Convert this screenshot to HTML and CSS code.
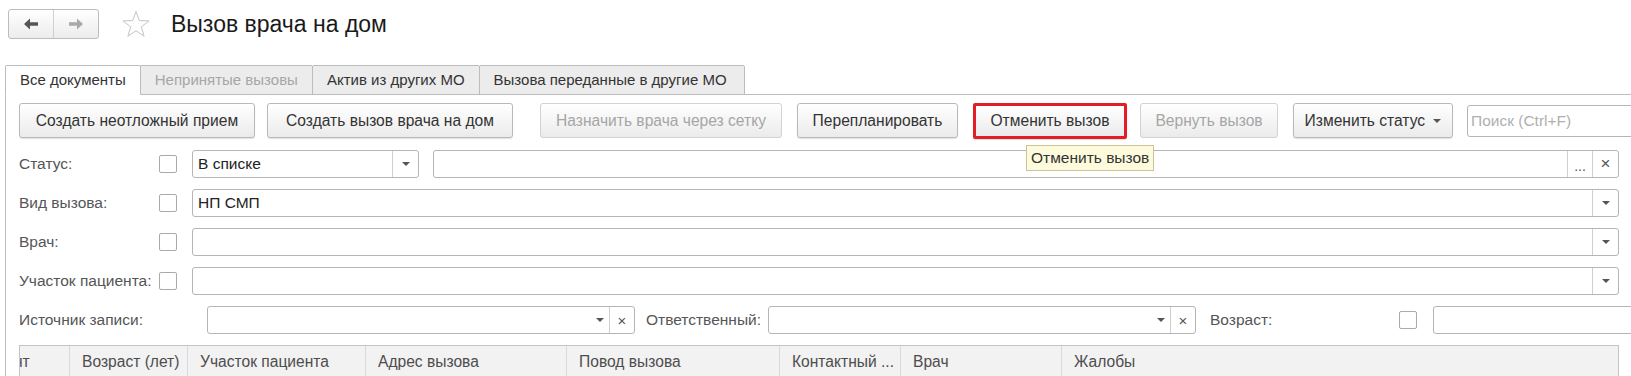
FILE: index.html
```html
<!DOCTYPE html>
<html lang="ru">
<head>
    <meta charset="UTF-8">
    <title>Вызов врача на дом</title>
    <link rel="stylesheet" href="styles.css">
</head>
<body>

    <div class="page-head">
        <div class="nav">
            <span class="nav-btn">
                <svg width="16" height="14" viewBox="0 0 16 14"><path d="M1 7 L7 1.5 V5.2 H15 V8.8 H7 V12.5 Z" fill="#555"/></svg>
            </span>
            <span class="nav-btn nav-sep">
                <svg width="16" height="14" viewBox="0 0 16 14"><path d="M15 7 L9 1.5 V5.2 H1 V8.8 H9 V12.5 Z" fill="#a9a9a9"/></svg>
            </span>
        </div>
        <svg class="star" width="30" height="28" viewBox="0 0 30 28">
            <polygon points="15,1.5 18.3,10.6 28,10.9 20.3,16.8 23.1,26.2 15,20.7 6.9,26.2 9.7,16.8 2,10.9 11.7,10.6" fill="none" stroke="#c4c4c4" stroke-width="1"/>
        </svg>
        <h1 class="title">Вызов врача на дом</h1>
    </div>

    <div class="tabs">
        <div class="tab active">Все документы</div>
        <div class="tab disabled">Непринятые вызовы</div>
        <div class="tab">Актив из других МО</div>
        <div class="tab">Вызова переданные в другие МО</div>
    </div>

    <div class="panel">
        <div class="toolbar">
            <button class="btn btn-urgent">Создать неотложный прием</button>
            <button class="btn btn-home">Создать вызов врача на дом</button>
            <button class="btn btn-grid disabled">Назначить врача через сетку</button>
            <button class="btn btn-replan">Перепланировать</button>
            <span class="marked-wrap">
                <button class="btn marked">Отменить вызов</button>
                <span class="tooltip">Отменить вызов</span>
            </span>
            <button class="btn btn-return disabled">Вернуть вызов</button>
            <button class="btn btn-status">Изменить статус <span class="caret"></span></button>
            <div class="search">Поиск (Ctrl+F)</div>
        </div>

        <div class="row first">
            <span class="label">Статус:</span>
            <span class="check"></span>
            <div class="field combo">
                <span class="value">В списке</span>
                <span class="fbtn"><span class="caret"></span></span>
            </div>
            <div class="field wide">
                <span class="value"></span>
                <span class="fbtn dots">...</span>
                <span class="fbtn">&times;</span>
            </div>
        </div>

        <div class="row">
            <span class="label">Вид вызова:</span>
            <span class="check"></span>
            <div class="field wide">
                <span class="value">НП СМП</span>
                <span class="fbtn"><span class="caret"></span></span>
            </div>
        </div>

        <div class="row">
            <span class="label">Врач:</span>
            <span class="check"></span>
            <div class="field wide">
                <span class="value"></span>
                <span class="fbtn"><span class="caret"></span></span>
            </div>
        </div>

        <div class="row">
            <span class="label">Участок пациента:</span>
            <span class="check"></span>
            <div class="field wide">
                <span class="value"></span>
                <span class="fbtn"><span class="caret"></span></span>
            </div>
        </div>

        <div class="row">
            <span class="label source">Источник записи:</span>
            <div class="field mid">
                <span class="value"></span>
                <span class="fbtn plain"><span class="caret"></span></span>
                <span class="fbtn thin">&times;</span>
            </div>
            <span class="label resp">Ответственный:</span>
            <div class="field mid">
                <span class="value"></span>
                <span class="fbtn plain"><span class="caret"></span></span>
                <span class="fbtn thin">&times;</span>
            </div>
            <span class="label age">Возраст:</span>
            <span class="check"></span>
            <div class="field tail"></div>
        </div>

        <div class="grid-head">
            <div class="col c0"><span class="cut">нт</span></div>
            <div class="col c1">Возраст (лет)</div>
            <div class="col c2">Участок пациента</div>
            <div class="col c3">Адрес вызова</div>
            <div class="col c4">Повод вызова</div>
            <div class="col c5">Контактный ...</div>
            <div class="col c6">Врач</div>
            <div class="col c7">Жалобы</div>
        </div>
    </div>

</body>
</html>
```

FILE: styles.css
```css
html {
    overflow: hidden;
}

body {
    margin: 0;
    background-color: #fff;
    color: #4a4a4a;
    font-family: "Liberation Sans", Arial, sans-serif;
    font-size: 15.5px;
}

/* header */

.page-head {
    display: flex;
    align-items: center;
    height: 48px;
    padding: 0 8px;
}

.nav {
    display: flex;
    width: 91px;
    height: 30px;
    box-sizing: border-box;
    border: 1px solid #bcbcbc;
    border-radius: 3px;
    background: linear-gradient(#fff, #ececec);
}

.nav-btn {
    flex: 1;
    display: flex;
    align-items: center;
    justify-content: center;
}

.nav-sep {
    border-left: 1px solid #d0d0d0;
}

.star {
    margin-left: 22px;
}

.title {
    margin: 0 0 0 20px;
    font-size: 23px;
    font-weight: normal;
    color: #1a1a1a;
}

/* tabs */

.tabs {
    display: flex;
    margin: 17px 0 0 5px;
    font-size: 15px;
}

.tab {
    height: 28px;
    line-height: 28px;
    padding: 0 14px;
    border: 1px solid #bcbcbc;
    border-radius: 2px 2px 0 0;
    margin-right: -1px;
    margin-bottom: -1px;
    background-color: #ececec;
    color: #333;
}

.tab:last-child {
    padding-right: 17px;
}

.tab.active {
    background-color: #fff;
    border-bottom-color: #fff;
}

.tab.disabled {
    color: #a6a6a6;
}

/* panel */

.panel {
    margin-left: 5px;
    border-top: 1px solid #bcbcbc;
    border-left: 1px solid #bcbcbc;
    padding: 8px 12px 0 13px;
}

.toolbar {
    display: flex;
    align-items: center;
    height: 35px;
}

.btn {
    flex-shrink: 0;
    height: 35px;
    padding: 0;
    border: 1px solid #b9b9b9;
    border-radius: 3px;
    background: linear-gradient(#fff, #ebebeb);
    box-shadow: 0 1px 1px rgba(0, 0, 0, 0.12);
    font-family: inherit;
    font-size: 15.6px;
    color: #333;
}

.btn.disabled {
    color: #a6a6a6;
    border-color: #d2d2d2;
    box-shadow: none;
}

.btn-urgent { width: 236px; margin-right: 12px; }
.btn-home { width: 246px; margin-right: 27px; }
.btn-grid { width: 242px; margin-right: 15px; }
.btn-replan { width: 161px; margin-right: 15px; }
.btn-return { width: 138px; margin-right: 15px; }
.btn-status { width: 160px; margin-right: 14px; }

.marked-wrap {
    position: relative;
    margin-right: 13px;
}

.btn.marked {
    width: 154px;
    height: 36px;
    border: 3px solid #e21d24;
    border-radius: 2px;
}

.tooltip {
    position: absolute;
    top: 42px;
    left: 53px;
    padding: 3px 4px;
    white-space: nowrap;
    background-color: #fdfbdb;
    border: 1px solid #c9c49a;
    color: #333;
}

.btn .caret {
    margin-left: 4px;
    vertical-align: middle;
}

.caret {
    display: inline-block;
    width: 0;
    height: 0;
    border-left: 4px solid transparent;
    border-right: 4px solid transparent;
    border-top: 4px solid #555;
}

.search {
    flex-shrink: 0;
    width: 200px;
    height: 30px;
    line-height: 30px;
    padding-left: 3px;
    border: 1px solid #b5b5b5;
    border-radius: 3px;
    color: #b0b0b0;
}

/* filter rows */

.row {
    display: flex;
    align-items: center;
    height: 28px;
    margin-top: 11px;
}

.row.first {
    margin-top: 12px;
}

.label {
    width: 140px;
    flex-shrink: 0;
    color: #555;
}

.check {
    width: 18px;
    height: 18px;
    flex-shrink: 0;
    box-sizing: border-box;
    border: 1px solid #aaa;
    border-radius: 2px;
    margin-right: 15px;
}

.field {
    display: flex;
    height: 28px;
    box-sizing: border-box;
    border: 1px solid #b5b5b5;
    border-radius: 3px;
    color: #222;
}

.field .value {
    flex: 1;
    line-height: 26px;
    padding-left: 5px;
}

.fbtn {
    width: 25px;
    display: flex;
    align-items: center;
    justify-content: center;
    border-left: 1px solid #cfcfcf;
    color: #555;
    font-size: 17px;
}

.fbtn.dots {
    font-size: 14px;
    padding-top: 4px;
    box-sizing: border-box;
}

.fbtn.plain {
    width: 18px;
    border-left: none;
}

.fbtn.thin {
    width: 24px;
    font-size: 15px;
}

.combo {
    width: 227px;
    margin-right: 14px;
}

.wide {
    flex: 1;
}

.label.source {
    width: 188px;
}

.label.resp {
    width: 122px;
    margin-left: 11px;
}

.label.age {
    width: 189px;
    margin-left: 14px;
}

.mid {
    width: 428px;
    flex-shrink: 0;
}

.tail {
    flex: 1;
    margin-right: -40px;
    margin-left: 1px;
}

/* list header */

.grid-head {
    display: flex;
    height: 32px;
    margin-top: 11px;
    border: 1px solid #c4c4c4;
    background-color: #f2f2f2;
    color: #4d4d4d;
    font-size: 15.6px;
}

.col {
    flex-shrink: 0;
    line-height: 31px;
    padding-left: 12px;
    border-right: 1px solid #d9d9d9;
    box-sizing: border-box;
    overflow: hidden;
    white-space: nowrap;
}

.c0 { width: 50px; padding-left: 0; }
.c1 { width: 118px; }
.c2 { width: 178px; }
.c3 { width: 201px; }
.c4 { width: 213px; }
.c5 { width: 121px; }
.c6 { width: 161px; }
.c7 { flex: 1; border-right: none; }

.cut {
    margin-left: -6px;
}
```
